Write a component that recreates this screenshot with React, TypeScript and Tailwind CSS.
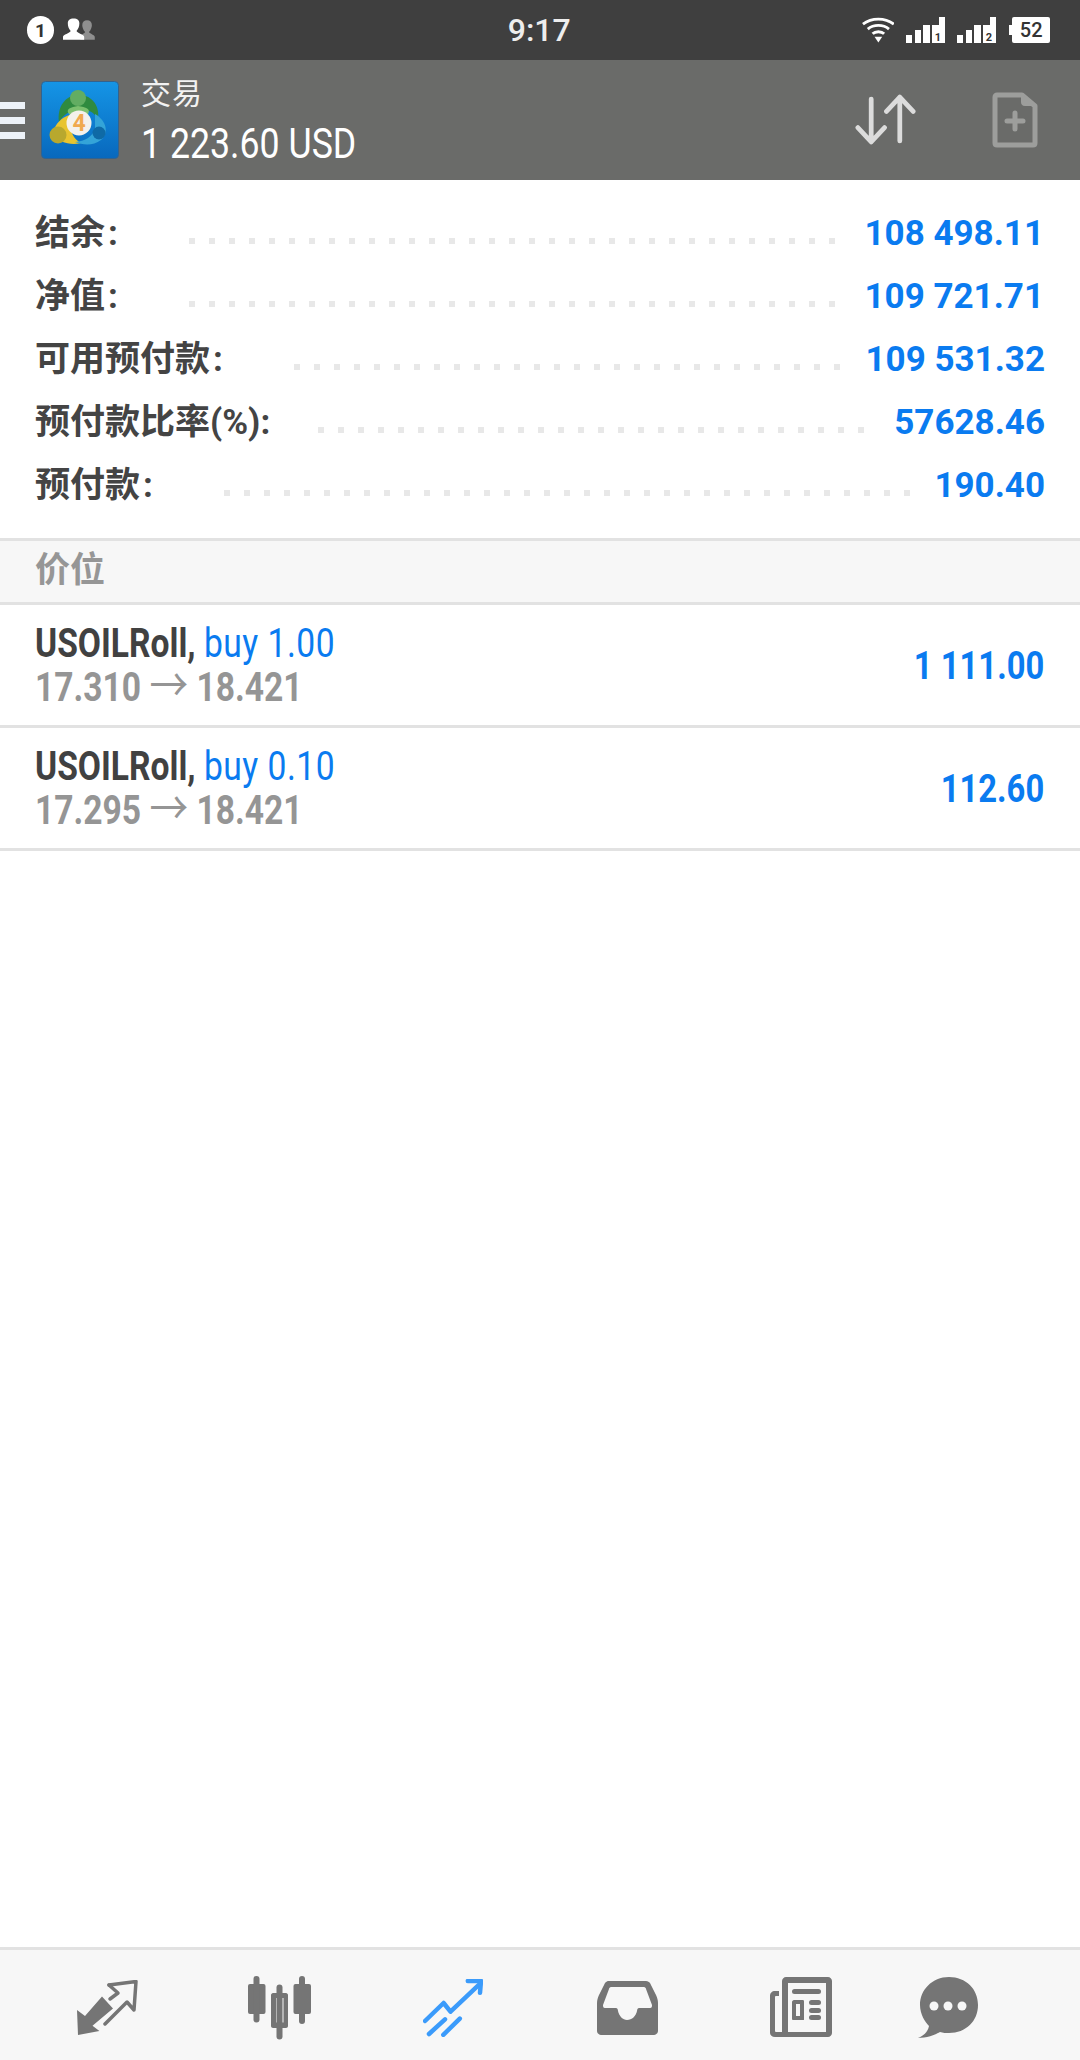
import React from "react";

const sans = "font-['Roboto','Noto_Sans_CJK_SC',sans-serif]";

const rows = [
  { label: "结余", colon: ":", cl: "ml-[3px]", value: "108 498.11", lw: "w-[154px]", dw: "w-[646px]", vr: "mr-[1px]" },
  { label: "净值", colon: ":", cl: "ml-[3px]", value: "109 721.71", lw: "w-[154px]", dw: "w-[646px]", vr: "mr-[1px]" },
  { label: "可用预付款", colon: ":", cl: "ml-[3px]", value: "109 531.32", lw: "w-[259px]", dw: "w-[546px]", vr: "mr-0" },
  { label: "预付款比率(%)", colon: ":", cl: "ml-0", value: "57628.46", lw: "w-[283px]", dw: "w-[546px]", vr: "mr-0" },
  { label: "预付款", colon: ":", cl: "ml-[3px]", value: "190.40", lw: "w-[189px]", dw: "w-[686px]", vr: "mr-0" },
];

const positions = [
  { sym: "USOILRoll,", side: "buy 1.00", from: "17.310", to: "18.421", pnl: "1 111.00" },
  { sym: "USOILRoll,", side: "buy 0.10", from: "17.295", to: "18.421", pnl: "112.60" },
];

function Signal({ n }: { n: string }) {
  return (
    <svg width="39" height="26" viewBox="0 0 39 26" fill="#fff">
      <rect x="0" y="18" width="6" height="8" />
      <rect x="9" y="13" width="6" height="13" />
      <rect x="17" y="8" width="7" height="18" />
      <rect x="26" y="8" width="13" height="18" />
      <rect x="33" y="0" width="6" height="10" />
      <text x="32" y="24" fontSize="11" fontWeight="700" fill="#333" textAnchor="middle" fontFamily="Roboto">{n}</text>
    </svg>
  );
}

function Logo() {
  return (
    <svg width="78" height="78" viewBox="0 0 78 78">
      <defs>
        <linearGradient id="mtbg" x1="0" y1="0" x2="0" y2="1">
          <stop offset="0" stopColor="#1595e6" />
          <stop offset="1" stopColor="#0868bd" />
        </linearGradient>
      </defs>
      <rect x="0.5" y="0.5" width="77" height="77" rx="4" fill="url(#mtbg)" stroke="#35628c" />
      <path d="M18 41 C16 26 24 14 38 14 C52 14 59 26 57 38 C52 30 46 28 38 29 C29 29 23 33 18 41Z" fill="#2f8a3f" />
      <circle cx="37" cy="17" r="8" fill="#62ad62" />
      <path d="M28 33 C24 28 30 26 37 25 C45 26 50 28 47 33 C42 37 33 37 28 33Z" fill="#7cc06f" />
      <path d="M36 33 C22 33 13 43 12 54 C17 61 30 65 40 62 C32 58 29 50 30 42Z" fill="#e8c430" />
      <circle cx="17" cy="54" r="8.5" fill="#b8a82e" />
      <path d="M54 33 C66 40 68 52 60 59 C52 65 42 64 34 61 C44 60 52 56 54 47Z" fill="#34a4d8" />
      <circle cx="58" cy="52" r="6.5" fill="#0f6aa6" />
      <circle cx="38" cy="42" r="12.5" fill="#f4f1ec" />
      <text x="38" y="50" fontSize="23" fontWeight="700" fill="#f0a94e" textAnchor="middle" fontFamily="Roboto">4</text>
    </svg>
  );
}

export default function App() {
  return (
    <div className={`${sans} flex h-[2060px] w-[1080px] flex-col overflow-hidden bg-white`}>
      {/* status bar */}
      <div className="flex h-[60px] shrink-0 items-center bg-[#3f3f3f] pl-[27px] pr-[30px]">
        <div className="flex h-[28px] w-[28px] items-center justify-center rounded-full bg-white text-[19px] font-bold leading-none text-[#333]">1</div>
        <svg className="ml-[9px]" width="33" height="24" viewBox="0 0 33 24">
          <path d="M18 22 H33 V19 C33 17 28 16 27 14 C29 12 30 9 30 7 C30 4 28 2 25 2 C22 2 20 4 20 7 C20 9 21 12 23 14 C22 16 18 17 18 19Z" fill="#8f8f8f" />
          <path d="M0 22 H22 V19 C22 17 15 15 14 13 C16 11 17 8 17 5 C17 2 15 0 11 0 C7 0 5 2 5 5 C5 8 6 11 8 13 C7 15 0 17 0 19Z" fill="#fff" />
        </svg>
        <div className="ml-[413px] w-[64px] text-center text-[32px] font-medium leading-none text-[#ededed]">9:17</div>
        <svg className="ml-[291px]" width="34" height="26" viewBox="0 0 34 26" fill="none" stroke="#fff" strokeWidth="3">
          <path d="M1 7 C10 0 24 0 33 7" />
          <path d="M6 12 C12 7 22 7 28 12" />
          <path d="M11 17 C14 14 20 14 23 17" />
          <path d="M13 20 H21 L17 26Z" fill="#fff" stroke="none" />
        </svg>
        <div className="ml-[12px]"><Signal n="1" /></div>
        <div className="ml-[12px]"><Signal n="2" /></div>
        <div className="relative ml-[16px] flex h-[26px] w-[39px] items-center justify-center rounded-[2px] bg-white text-[20px] font-medium leading-none text-[#333]">
          52
          <span className="absolute left-[-3px] top-[8px] h-[10px] w-[3px] bg-white" />
        </div>
      </div>

      {/* toolbar */}
      <div className="flex h-[120px] shrink-0 items-center bg-[#6a6b69]">
        <div className="flex w-[25px] flex-col gap-[8px]">
          <div className="h-[7px] bg-[#edf2f8]" />
          <div className="h-[7px] bg-[#edf2f8]" />
          <div className="h-[7px] bg-[#edf2f8]" />
        </div>
        <div className="ml-[16px]"><Logo /></div>
        <div className="ml-[22px] flex flex-col text-white">
          <div className="h-[50px] text-[30px] leading-[44px] tracking-[1px] text-[#f2f2f2]">交易</div>
          <div className="h-[46px] origin-left scale-x-[0.85] whitespace-nowrap text-[42px] leading-[44px]">1 223.60 USD</div>
        </div>
        <svg className="ml-auto" width="61" height="56" viewBox="0 0 64 56" fill="none" stroke="#dcdcdc" strokeWidth="5" strokeLinecap="round" strokeLinejoin="round">
          <path d="M17 6 V50 M3 36 L17 51 L31 36" />
          <path d="M47 50 V4 M33 19 L47 4 L61 19" />
        </svg>
        <svg className="ml-[76px] mr-[42px]" width="46" height="56" viewBox="0 0 46 56" fill="none">
          <path d="M5 3 H30 L43 14 V51 C43 52.5 42 53 41 53 H5 C4 53 3 52.5 3 51 V5 C3 4 4 3 5 3Z" stroke="#9d9e9c" strokeWidth="5" strokeLinejoin="round" />
          <path d="M29 1 L45 14 H33 C30 14 29 12 29 10Z" fill="#9d9e9c" />
          <path d="M23 21 V37 M15 29 H31" stroke="#9d9e9c" strokeWidth="5" strokeLinecap="round" />
        </svg>
      </div>

      {/* account */}
      <div className="flex flex-col pb-[21px] pt-[22px]">
        {rows.map((r) => (
          <div key={r.label} className="flex h-[63px] items-center pl-[35px] pr-[35px]">
            <div className={`whitespace-nowrap text-[35px] font-bold leading-none text-[#444] ${r.lw}`}>
              {r.label}
              <span className={r.cl}>{r.colon}</span>
            </div>
            <div className={`mt-[14px] h-[6px] bg-[linear-gradient(90deg,#e8e8e8_6px,transparent_6px)] bg-[length:20px_6px] bg-repeat-x ${r.dw}`} />
            <div className={`ml-auto whitespace-nowrap text-[35px] font-bold leading-none text-[#0a7bf0] ${r.vr}`}>{r.value}</div>
          </div>
        ))}
      </div>

      {/* section */}
      <div className="flex h-[67px] shrink-0 items-center border-y-[3px] border-[#e2e2e2] bg-[#f7f7f7] pb-[2px] pl-[35px] text-[35px] font-bold leading-none text-[#969696]">价位</div>

      {/* positions */}
      {positions.map((p) => (
        <div key={p.from} className="flex h-[123px] shrink-0 items-center border-b-[3px] border-[#e2e2e2] pl-[35px] pr-[36px]">
          <div className="mt-[2px] flex w-[300px] origin-left scale-x-[0.84] flex-col whitespace-nowrap text-[40px] leading-[44px]">
            <div className="h-[44px]">
              <span className="font-bold text-[#414141]">{p.sym}</span>{" "}
              <span className="tracking-[0.6px] text-[#0a7bf0]">{p.side}</span>
            </div>
            <div className="h-[44px] font-bold text-[#959595]">
              {p.from} <span className="text-[46px] font-normal leading-[0]">→</span> {p.to}
            </div>
          </div>
          <div className="ml-auto mt-[2px] origin-right scale-x-[0.84] whitespace-nowrap text-[39px] font-bold leading-none text-[#0a7bf0]">{p.pnl}</div>
        </div>
      ))}

      <div className="flex-1" />

      {/* bottom nav */}
      <div className="flex h-[113px] shrink-0 items-center border-t-[3px] border-[#e2e2e2] bg-[#f7f7f7] pt-[5px]">
        <svg className="ml-[77px]" width="62" height="56" viewBox="0 0 62 56" fill="none">
          <path d="M0 30 L8 36 L25 16.500 L36 28.600 L15.500 45.800 L22.400 51 L1 55Z" fill="#757575" />
          <path d="M32 5 L59 1.500 L57 30 L50 22 L28 44" stroke="#757575" strokeWidth="3.500" strokeLinejoin="round" strokeLinecap="round" />
          <path d="M32 5 L41 13 L33 19" stroke="#757575" strokeWidth="3.500" strokeLinejoin="round" strokeLinecap="round" />
        </svg>
        <svg className="ml-[109px]" width="63" height="64" viewBox="0 0 63 64" fill="#757575">
          <rect x="0" y="8" width="17.500" height="30" rx="2" />
          <rect x="5.500" y="0" width="6" height="46.500" rx="3" />
          <rect x="45.500" y="8" width="17.500" height="30" rx="2" />
          <rect x="51" y="0" width="6" height="48" rx="3" />
          <rect x="28.500" y="8.500" width="6" height="55" rx="3" />
          <path fillRule="evenodd" d="M25 17 H38 C39 17 40 18 40 19 V50 C40 51 39 52 38 52 H25 C24 52 23 51 23 50 V19 C23 18 24 17 25 17Z M28 22 V46.500 H35.500 V22Z" />
        </svg>
        <svg className="ml-[112px]" width="60" height="58" viewBox="0 0 60 58" fill="none" stroke="#3b9bfb" strokeWidth="4.500" strokeLinecap="round" strokeLinejoin="round">
          <path d="M2 42 L20.600 24 L27.500 32.700 L55.800 5.900" />
          <path d="M44.800 2 H58 L57 13.800" />
          <path d="M6 55 L22 40.300" />
          <path d="M20.300 55.800 L36.800 39.600" />
        </svg>
        <svg className="ml-[114px]" width="61" height="56" viewBox="0 0 61 56">
          <path fillRule="evenodd" fill="#757575" d="M11 1 H49 C51 1 52 2 53 3 L59 15 C60 17 61 20 61 23 V51 C61 53 59 55 57 55 H4 C2 55 0 53 0 51 V23 C0 20 1 17 2 15 L8 3 C9 2 10 1 11 1Z M14 7 C13 7 12 8 12 9 L6 25 C6 26 6 28 8 28 H19 C20 28 21 29 21 31 C22 36 26 40 30 40 C35 40 39 36 40 31 C40 29 41 28 42 28 H53 C55 28 55 26 55 25 L49 9 C49 8 48 7 47 7Z" />
        </svg>
        <svg className="ml-[112px]" width="62" height="62" viewBox="0 0 62 62" fill="none">
          <path fillRule="evenodd" fill="#757575" d="M16 0 H58 C60 0 62 2 62 4 V56 C62 58 60 60 58 60 H5 C2 60 0 58 0 56 V19 C0 16 2 14 5 14 H9 V19 H6 C5.500 19 5 19.500 5 20 V54 C5 55 6 55 7 55 H12 V4 C12 2 14 0 16 0Z M18 6 V55 H56 V6Z" />
          <rect x="22" y="12" width="29" height="5" rx="2.500" fill="#757575" />
          <path fillRule="evenodd" fill="#757575" d="M24 23 H33 C34 23 34 24 34 25 V42 C34 43 34 43 33 43 H24 C23 43 22 43 22 42 V25 C22 24 23 23 24 23Z M26 27 V39 H30 V27Z" />
          <rect x="39" y="23" width="12" height="5" rx="2.500" fill="#757575" />
          <rect x="39" y="31" width="12" height="5" rx="2.500" fill="#757575" />
          <rect x="39" y="38" width="12" height="5" rx="2.500" fill="#757575" />
        </svg>
        <svg className="ml-[85px]" width="62" height="62" viewBox="0 0 62 62">
          <path fill="#757575" d="M32 0 C15 0 3 13 3 28 C3 37 8 45 12 49 C11 54 8 58 1 61 C9 61 18 58 23 55 C26 56 29 56 32 56 C49 56 61 44 61 28 C61 12 49 0 32 0Z" />
          <circle cx="17" cy="29" r="4.500" fill="#f7f7f7" />
          <circle cx="31" cy="29" r="4.500" fill="#f7f7f7" />
          <circle cx="45" cy="29" r="4.500" fill="#f7f7f7" />
        </svg>
      </div>
    </div>
  );
}
